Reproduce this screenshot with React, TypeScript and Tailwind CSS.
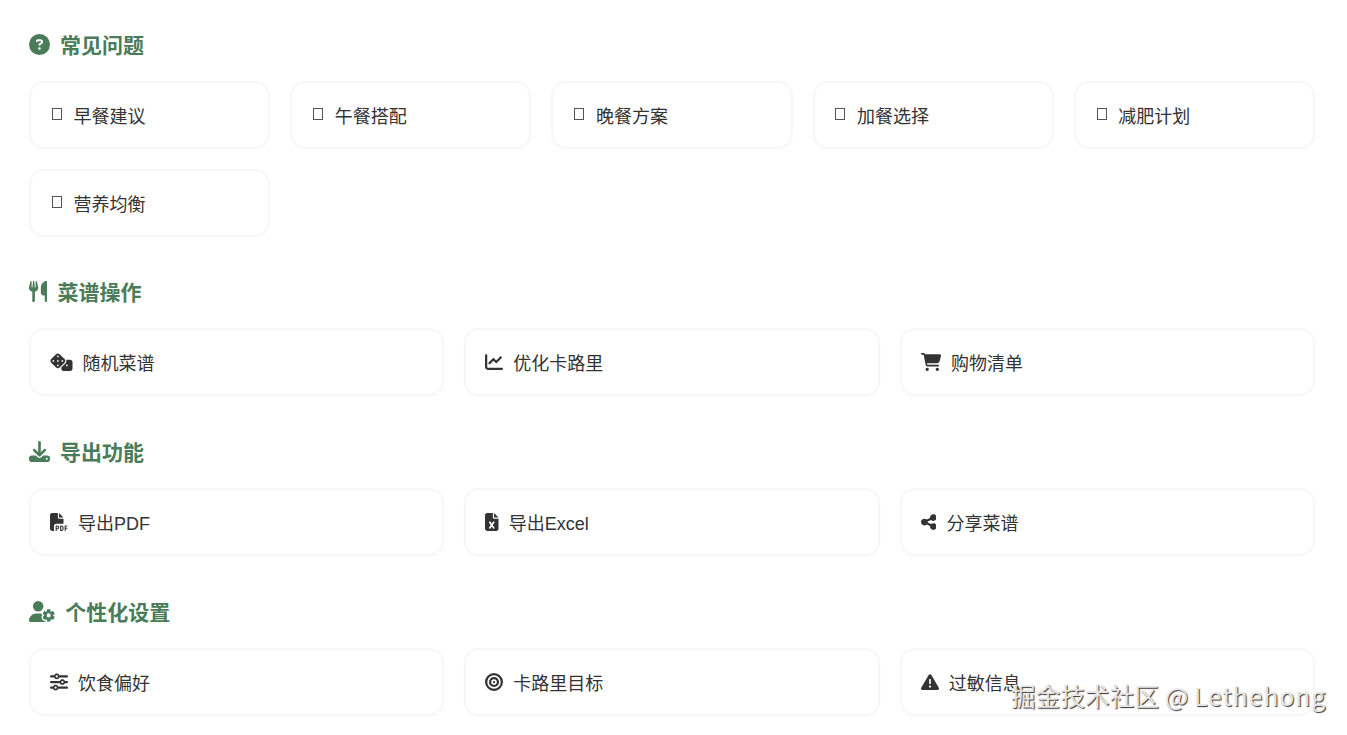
import type { ReactNode } from 'react'
import {
  FaBullseye,
  FaCartShopping,
  FaChartLine,
  FaCircleQuestion,
  FaDice,
  FaDownload,
  FaFileExcel,
  FaFilePdf,
  FaShareNodes,
  FaSliders,
  FaTriangleExclamation,
  FaUserGear,
  FaUtensils,
} from 'react-icons/fa6'

const faqItems = ['早餐建议', '午餐搭配', '晚餐方案', '加餐选择', '减肥计划', '营养均衡']

const recipeActions = [
  { icon: <FaDice className="w-[22.5px]" />, label: '随机菜谱' },
  { icon: <FaChartLine className="w-[18px]" />, label: '优化卡路里' },
  { icon: <FaCartShopping className="w-[20.25px]" />, label: '购物清单' },
]

const exportActions = [
  { icon: <FaFilePdf className="w-[18px]" />, label: '导出PDF' },
  { icon: <FaFileExcel className="w-[13.5px]" />, label: '导出Excel' },
  { icon: <FaShareNodes className="w-[15.75px]" />, label: '分享菜谱' },
]

const settingsActions = [
  { icon: <FaSliders className="w-[18px]" />, label: '饮食偏好' },
  { icon: <FaBullseye className="w-[18px]" />, label: '卡路里目标' },
  { icon: <FaTriangleExclamation className="w-[18px]" />, label: '过敏信息' },
]

function SectionTitle({ icon, title }: { icon: ReactNode; title: string }) {
  return (
    <h3 className="mb-[19px] flex h-[33px] items-center gap-2.5 text-[21px] font-bold text-[#4a7c59] [&_svg]:mb-[2px]">
      {icon}
      <span className="leading-[33px]">{title}</span>
    </h3>
  )
}

function ActionButton({ icon, label }: { icon: ReactNode; label: string }) {
  return (
    <button className="flex items-center gap-2.5 rounded-[15px] border-2 border-[#f6f8f7] bg-white px-[19px] pb-[18px] pt-[19px] text-left text-[18px] text-[#333333] shadow-[0_1px_6px_rgba(0,0,0,0.015)] [&_svg]:mb-[2px]">
      {icon}
      <span className="pt-[3px] leading-[24px]">{label}</span>
    </button>
  )
}

// 缺失 emoji 字形时显示的方框
function MissingGlyph() {
  return (
    <span className="mb-[2px] flex w-[13.5px] justify-center">
      <span className="h-3 w-[10px] border border-[#555555]" />
    </span>
  )
}

export default function App() {
  return (
    <div className="relative h-[735px] overflow-hidden bg-white pl-[29px] pr-[32px] pt-[28.6px] font-['Liberation_Sans','Noto_Sans_CJK_SC',sans-serif]">
      <section className="mb-[39.5px]">
        <SectionTitle icon={<FaCircleQuestion className="w-[21px]" />} title="常见问题" />
        <div className="grid grid-cols-5 gap-5">
          {faqItems.map((label) => (
            <ActionButton key={label} icon={<MissingGlyph />} label={label} />
          ))}
        </div>
      </section>

      <section className="mb-10">
        <SectionTitle icon={<FaUtensils className="w-[18.4px]" />} title="菜谱操作" />
        <div className="grid grid-cols-3 gap-5">
          {recipeActions.map((item) => (
            <ActionButton key={item.label} icon={item.icon} label={item.label} />
          ))}
        </div>
      </section>

      <section className="mb-10">
        <SectionTitle icon={<FaDownload className="w-[21px]" />} title="导出功能" />
        <div className="grid grid-cols-3 gap-5">
          {exportActions.map((item) => (
            <ActionButton key={item.label} icon={item.icon} label={item.label} />
          ))}
        </div>
      </section>

      <section className="mb-10">
        <SectionTitle icon={<FaUserGear className="w-[26.25px]" />} title="个性化设置" />
        <div className="grid grid-cols-3 gap-5">
          {settingsActions.map((item) => (
            <ActionButton key={item.label} icon={item.icon} label={item.label} />
          ))}
        </div>
      </section>

      {/* 水印 */}
      <div className="absolute left-[1011px] top-[680px] whitespace-nowrap font-['Noto_Sans_CJK_SC',sans-serif] text-[24.5px] font-normal leading-[32px] tracking-[0.2px] text-[#e6e6e6] [text-shadow:1px_1px_1px_#333]">
        掘金技术社区 @ <span className="tracking-[1.1px]">Lethehong</span>
      </div>
    </div>
  )
}
